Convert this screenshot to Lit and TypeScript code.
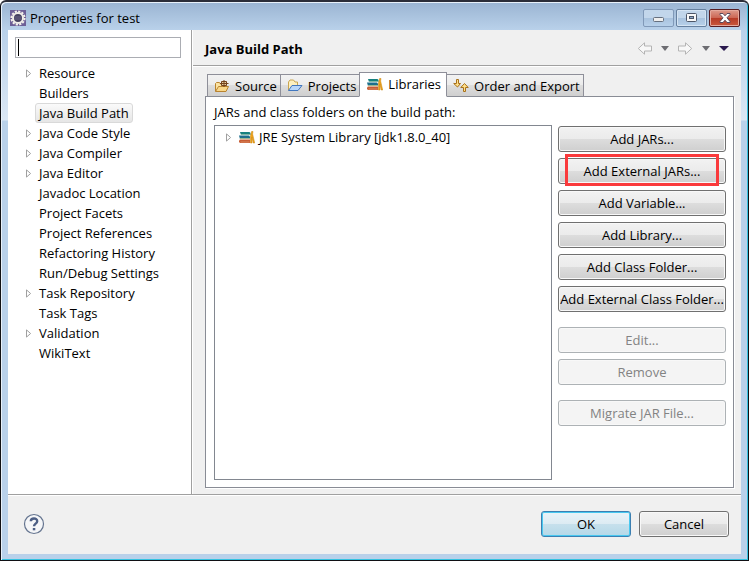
import { LitElement, html, css, svg, nothing } from "lit";
import { customElement, state } from "lit/decorators.js";
import { classMap } from "lit/directives/class-map.js";

interface Category {
  name: string;
  expandable?: boolean;
}

const CATEGORIES: Category[] = [
  { name: "Resource", expandable: true },
  { name: "Builders" },
  { name: "Java Build Path" },
  { name: "Java Code Style", expandable: true },
  { name: "Java Compiler", expandable: true },
  { name: "Java Editor", expandable: true },
  { name: "Javadoc Location" },
  { name: "Project Facets" },
  { name: "Project References" },
  { name: "Refactoring History" },
  { name: "Run/Debug Settings" },
  { name: "Task Repository", expandable: true },
  { name: "Task Tags" },
  { name: "Validation", expandable: true },
  { name: "WikiText" },
];

const expander = html`<svg class="expander" width="6" height="9" viewBox="0 0 6 9">
  <path d="M.5 .9V8.1L4.6 4.5Z" fill="#fff" stroke="#a0a0a0" />
</svg>`;

const eclipseIcon = html`<svg width="16" height="16" viewBox="0 0 16 16">
  <rect width="16" height="16" fill="#6d5f96" />
  <circle cx="8" cy="8" r="6.6" fill="none" stroke="#f4f1ea" stroke-width="2" stroke-dasharray="2.2 1.25" />
  <circle cx="8" cy="8" r="5" fill="#46405f" stroke="#f1eee8" stroke-width="2" />
  <path d="M4.500 7h7M4.500 9h7" stroke="#6b6488" />
</svg>`;

const libraryIcon = html`<svg width="16" height="14" viewBox="0 0 16 14">
  <path d="M1 2h9.500l1 1v2H2Z" fill="#16807f" />
  <path d="M2 4.500h9" stroke="#7fb8a4" />
  <path d="M0 5.500h10l1 1v2.500H1Z" fill="#1d6e8c" />
  <path d="M1 8.500h10" stroke="#9cb890" />
  <path d="M1 9.500h10v3.500H1l-1-1v-1.500Z" fill="#c75d35" />
  <path d="M1.500 12h9" stroke="#d98a60" />
  <path d="M12.600 1.500 11.500 6v7h1.500V7l1.200 6h1.500L13.600 4l.4-2.500Z" fill="#f0a41c" stroke="#c98309" stroke-width=".5" />
</svg>`;

const sourceIcon = html`<svg width="16" height="14" viewBox="0 0 16 14">
  <path d="M1.500 12V4.500l1-1h3l1 1.500H12V12Z" fill="#fbe3a2" stroke="#b9832f" />
  <path d="M1.500 12.500 4.500 7.500h10l-2.500 5Z" fill="#f9d789" stroke="#b9832f" />
  <path d="M7.500 2.500h5v4h-5Z" fill="#e8cfa0" stroke="#74431d" />
  <path d="M10 1v7M6 4.500h8.500" stroke="#74431d" />
</svg>`;

const projectsIcon = html`<svg width="16" height="14" viewBox="0 0 16 14">
  <path d="M1.500 11.500V3l1.500-2h3.500L8 3h2.500v4.500" fill="#fdf0c0" stroke="#c9a551" />
  <path d="M1.500 11.500 5 6.500h10l-4 5Z" fill="#b7d6fb" stroke="#4277bf" />
</svg>`;

const orderIcon = html`<svg width="16" height="15" viewBox="0 0 16 15">
  <path d="M3.500 1.500h2v4h2L4.500 9l-3.800-3.500h2.800Z" fill="#ffe08a" stroke="#a8711a" />
  <path d="M10.500 13.500h2v-4h2.700L11.500 5.500 7.800 9.500h2.700Z" fill="#ffe08a" stroke="#a8711a" />
</svg>`;

const TABS = [
  { name: "Source", icon: sourceIcon },
  { name: "Projects", icon: projectsIcon },
  { name: "Libraries", icon: libraryIcon },
  { name: "Order and Export", icon: orderIcon },
];

const ACTIONS = [
  [
    "Add JARs...",
    "Add External JARs...",
    "Add Variable...",
    "Add Library...",
    "Add Class Folder...",
    "Add External Class Folder...",
  ],
  ["Edit...", "Remove"],
  ["Migrate JAR File..."],
];

@customElement("app-root")
export class AppRoot extends LitElement {
  @state() private category = "Java Build Path";
  @state() private tab = "Libraries";

  static styles = css`
    :host {
      display: block;
      font: 13px/20px "Open Sans", "Noto Sans", sans-serif;
      color: #000;
    }
    * {
      box-sizing: border-box;
    }
    svg {
      display: block;
      flex: none;
    }
    button,
    input {
      font: inherit;
      color: inherit;
      margin: 0;
    }
    .window {
      min-height: 100vh;
      display: flex;
      flex-direction: column;
      padding: 0 6px 6px;
      border: 1px solid #101014;
      border-top: 2px solid #2b2d38;
      border-radius: 6px 6px 0 0;
      background: linear-gradient(#9ab4d2, #b9d1ea 28px, #dbe7f4 118px, #b9d1ea 119px);
      box-shadow: inset 1px 1px #e8f1fa, inset -1px -1px #35c2e0;
    }
    .titlebar {
      display: flex;
      align-items: center;
      height: 28px;
      padding: 3px 2px 0 3px;
      gap: 4px;
    }
    .titlebar h1 {
      flex: 1;
      margin: 0;
      font-size: 13px;
      font-weight: 400;
    }
    .controls {
      display: flex;
      gap: 2px;
    }
    .control {
      display: grid;
      place-items: center;
      width: 31px;
      height: 18px;
      padding: 0;
      border: 1px solid #66809f;
      border-radius: 2px;
      background: linear-gradient(#c2d6eb 50%, #a8c2de 50%, #b7d0ea);
      box-shadow: inset 0 0 0 1px #d5e4f3;
    }
    .control.min {
      border-color: #8099b8;
      box-shadow: none;
    }
    .control.close {
      border-color: #571d22;
      background: linear-gradient(#dd9a8c, #cc6552 50%, #b63a26 50%, #c9583c);
      box-shadow: inset 0 0 0 1px #e5a99c;
    }
    .client {
      flex: 1;
      display: flex;
      flex-direction: column;
      margin: 0 1px;
      background: #f0f0f0;
    }
    .main {
      flex: 1;
      display: grid;
      grid-template-columns: 184px 1fr;
      border-bottom: 1px solid #a0a0a0;
    }
    .nav {
      padding: 7px 10px 0 7px;
      background: #fff;
      border-right: 1px solid #a0a0a0;
    }
    .filter {
      display: block;
      width: 100%;
      height: 21px;
      padding: 0 3px;
      border: 1px solid #abadb3;
      border-radius: 0;
      outline: none;
      background: #fff;
    }
    .filter:focus:placeholder-shown {
      caret-color: transparent;
      background: linear-gradient(#000, #000) 2px 1px / 1px 17px no-repeat #fff;
    }
    .categories {
      list-style: none;
      margin: 5px 0 0;
      padding: 0 0 0 10px;
    }
    .categories li {
      display: flex;
      align-items: center;
      height: 20px;
    }
    .twisty {
      width: 10px;
    }
    .twisty .expander {
      margin-left: 1px;
    }
    .category {
      height: 20px;
      padding: 0 3px;
      line-height: 18px;
      border: 1px solid transparent;
      border-radius: 3px;
      background: none;
      white-space: nowrap;
    }
    .category.selected {
      border-color: #d9d9d9;
      background: linear-gradient(#fafafa, #e6e6e6);
    }
    .page {
      display: flex;
      flex-direction: column;
      border-left: 1px solid #fff;
    }
    .heading {
      display: flex;
      align-items: center;
      height: 36px;
      padding: 2px 12px 0;
      border-bottom: 1px solid #a0a0a0;
      box-shadow: 0 1px #fff;
    }
    .heading h2 {
      flex: 1;
      margin: 0;
      font-size: 13px;
    }
    .history {
      display: flex;
      align-items: center;
      gap: 9px;
    }
    .history button {
      padding: 0;
      border: 0;
      background: none;
    }
    .content {
      flex: 1;
      display: flex;
      flex-direction: column;
      padding: 6px 7px 6px 12px;
    }
    .tabs {
      position: relative;
      display: flex;
      align-items: flex-end;
      height: 25px;
      padding-left: 2px;
    }
    .tab {
      display: flex;
      align-items: center;
      gap: 5px;
      height: 23px;
      padding: 0 3px 0 6px;
      border: 1px solid #8e8f99;
      border-bottom-color: #898c95;
      border-left-width: 0;
      background: linear-gradient(#f2f2f2, #ebebeb 50%, #dddddd 50%, #cfcfcf);
      white-space: nowrap;
    }
    .tab:first-child {
      border-left-width: 1px;
    }
    .tab.active {
      height: 25px;
      padding: 0 5px 2px 7px;
      border-left-width: 1px;
      margin-left: -1px;
      border-bottom-color: #fff;
      background: #fff;
    }
    .panel {
      flex: 1;
      display: flex;
      flex-direction: column;
      margin-top: -1px;
      padding: 5px 7px 7px 8px;
      border: 1px solid #898c95;
      background: #fff;
      box-shadow: 1px 1px #fff;
    }
    .caption {
      height: 23px;
    }
    .split {
      flex: 1;
      display: grid;
      grid-template-columns: 1fr 168px;
      gap: 6px;
    }
    .entries {
      list-style: none;
      margin: 0;
      padding: 1px 10px;
      border: 1px solid #828790;
    }
    .entries li {
      display: flex;
      align-items: center;
      height: 20px;
      gap: 4px;
    }
    .entries .expander {
      margin: 0 3px 0 1px;
    }
    .actions {
      display: flex;
      flex-direction: column;
      gap: 15px;
      padding-top: 1px;
    }
    .group {
      display: flex;
      flex-direction: column;
      gap: 6px;
    }
    .push {
      width: 100%;
      height: 26px;
      padding: 0;
      line-height: 22px;
      border: 1px solid #707070;
      border-radius: 3px;
      background: linear-gradient(#f2f2f2, #ebebeb 50%, #dddddd 50%, #cfcfcf);
      box-shadow: inset 0 0 0 1px #f8f8f8;
      white-space: nowrap;
    }
    .push:disabled {
      color: #838383;
      border-color: #adb2b5;
      background: #f4f4f4;
    }
    .marked {
      position: relative;
    }
    .marked::after {
      content: "";
      position: absolute;
      inset: -5px 6px -3px;
      border: 3px solid #fa3a3c;
      pointer-events: none;
    }
    .footer {
      display: flex;
      align-items: center;
      gap: 8px;
      height: 59px;
      padding: 0 12px 2px 15px;
      border-top: 1px solid #fff;
    }
    .help {
      margin-right: auto;
      padding: 0;
      border: 0;
      background: none;
    }
    .footer .push {
      width: 90px;
    }
    .footer .default {
      border-color: #3c7fb1;
      background: linear-gradient(#eaf3f8, #dcebf3 50%, #c6e0ec 50%, #b5d8e8);
      box-shadow: inset 0 0 0 1px #48c8f0;
    }
  `;

  render() {
    return html`
      <div class="window">
        <header class="titlebar">
          ${eclipseIcon}
          <h1>Properties for test</h1>
          <div class="controls">
            <button class="control min" aria-label="Minimize">
              <svg width="12" height="10" viewBox="0 0 12 10">
                <rect x=".5" y="4.500" width="10" height="4" rx="1" fill="#eee" stroke="#66707f" />
              </svg>
            </button>
            <button class="control" aria-label="Maximize">
              <svg width="11" height="10" viewBox="0 0 11 10">
                <rect x=".5" y=".5" width="10" height="8" rx="1" fill="#f8f8f8" stroke="#4d5668" />
                <rect x="3.500" y="3.500" width="4" height="2" fill="#8ba7c7" stroke="#4d5668" />
              </svg>
            </button>
            <button class="control close" aria-label="Close">
              <svg width="12" height="10" viewBox="0 0 12 10">
                <path d="M1 .5h3l2 2.300 2-2.300h3v1L8 4.800l3 3.700v1H8L6 7.200 4 9.500H1v-1l3-3.700L1 1.500Z" fill="#fff" stroke="#5a4a5c" />
              </svg>
            </button>
          </div>
        </header>
        <div class="client">
          <div class="main">
            <nav class="nav">
              <input class="filter" type="text" placeholder=" " aria-label="Filter" />
              <ul class="categories">
                ${CATEGORIES.map(
                  (c) => html`<li>
                    <span class="twisty">${c.expandable ? expander : nothing}</span>
                    <button
                      class=${classMap({ category: true, selected: c.name === this.category })}
                      @click=${() => (this.category = c.name)}
                    >${c.name}</button>
                  </li>`
                )}
              </ul>
            </nav>
            <section class="page">
              <div class="heading">
                <h2>${this.category}</h2>
                <div class="history">
                  ${this.arrow("Back", false)} ${this.caret("Back history", "#6d6d72")}
                  ${this.arrow("Forward", true)} ${this.caret("Forward history", "#6d6d72")}
                  ${this.caret("Menu", "#2b1a4e", true)}
                </div>
              </div>
              <div class="content">
                <div class="tabs" role="tablist">
                  ${TABS.map(
                    (t) => html`<button
                      role="tab"
                      aria-selected=${t.name === this.tab}
                      class=${classMap({ tab: true, active: t.name === this.tab })}
                      @click=${() => (this.tab = t.name)}
                    >${t.icon}<span>${t.name}</span></button>`
                  )}
                </div>
                <div class="panel" role="tabpanel">
                  <div class="caption">JARs and class folders on the build path:</div>
                  <div class="split">
                    <ul class="entries">
                      <li>${expander}${libraryIcon}<span>JRE System Library [jdk1.8.0_40]</span></li>
                    </ul>
                    <div class="actions">
                      ${ACTIONS.map(
                        (group, i) => html`<div class="group">
                          ${group.map(
                            (name) => html`<button
                              class=${classMap({ push: true, marked: name === "Add External JARs..." })}
                              ?disabled=${i > 0}
                            >${name}</button>`
                          )}
                        </div>`
                      )}
                    </div>
                  </div>
                </div>
              </div>
            </section>
          </div>
          <footer class="footer">
            <button class="help" aria-label="Help">
              <svg width="22" height="22" viewBox="0 0 22 22">
                <circle cx="11" cy="11" r="9.500" fill="#f5f6f8" stroke="#64748f" stroke-width="1.200" />
                <path d="M7.800 8.300C7.800 4.500 14.200 4.500 14.200 8.200 14.200 10.600 11 10.600 11 13.200" fill="none" stroke="#4d5f85" stroke-width="2.400" />
                <rect x="9.800" y="15" width="2.500" height="2.300" fill="#4d5f85" />
              </svg>
            </button>
            <button class="push default">OK</button>
            <button class="push">Cancel</button>
          </footer>
        </div>
      </div>
    `;
  }

  firstUpdated() {
    this.renderRoot.querySelector<HTMLInputElement>(".filter")?.focus();
  }

  private arrow(label: string, forward: boolean) {
    const shape = forward
      ? svg`<path d="M.5 4h7V.8L13.700 6.500 7.500 12.200V9h-7Z" />`
      : svg`<path d="M14.500 4h-7V.8L1.300 6.500l6.200 5.700V9h7Z" />`;
    return html`<button aria-label=${label}>
      <svg width="15" height="13" viewBox="0 0 15 13" fill="#f8f8f8" stroke="#b4b4b4">${shape}</svg>
    </button>`;
  }

  private caret(label: string, color: string, big = false) {
    return html`<button aria-label=${label}>
      <svg width=${big ? 10 : 8} height="5" viewBox="0 0 8 4" preserveAspectRatio="none">
        <path d="M0 0h8L4 4Z" fill=${color} />
      </svg>
    </button>`;
  }
}
